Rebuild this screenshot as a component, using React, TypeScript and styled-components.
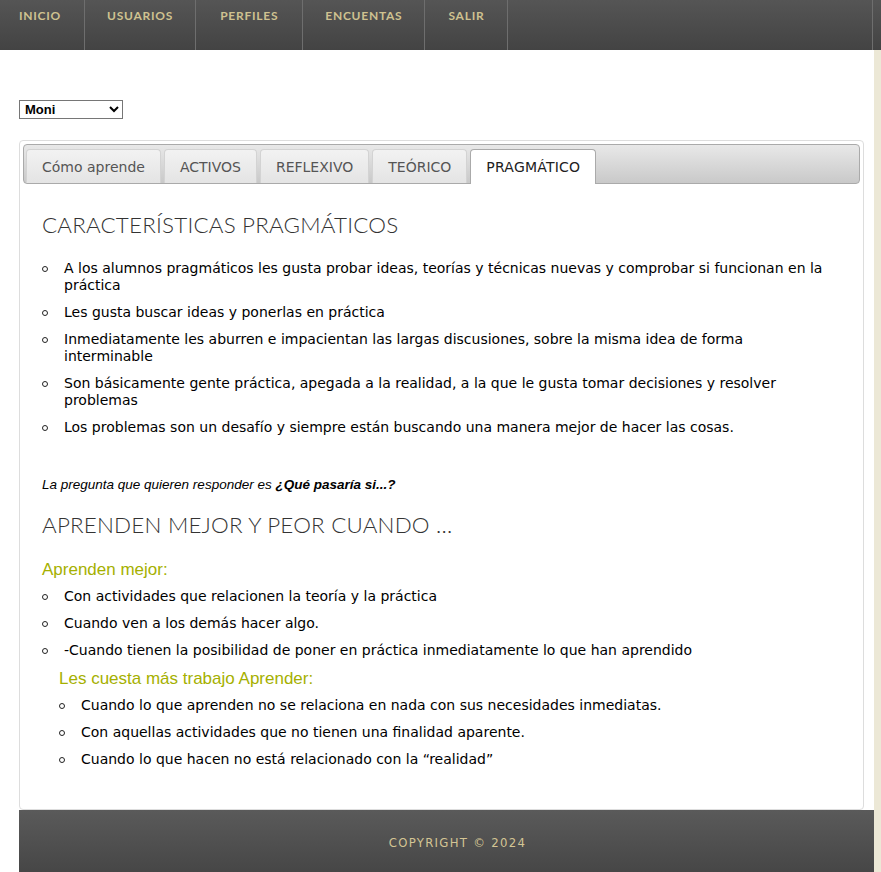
import React, { useState } from "react";
import styled, { createGlobalStyle } from "styled-components";

const Global = createGlobalStyle`
  html, body { margin: 0; padding: 0; }
  body { background: #ece8d6; font-family: "DejaVu Sans", Verdana, sans-serif; }
`;

const TopFix = styled.div`
  position: fixed;
  top: 0;
  left: 0;
  right: 0;
  z-index: 10;
`;

const Nav = styled.nav`
  display: flex;
  height: 50px;
  background: linear-gradient(#555555, #434343);
`;

const NavItem = styled.a<{ $pad?: number }>`
  display: flex;
  align-items: flex-start;
  padding: 8px ${(p) => 22 + (p.$pad || 0)}px 0 ${(p) => 22 + (p.$pad || 0)}px;
  border-right: 1px solid #6e6e6e;
  color: #cfc290;
  font-family: Lato, "Liberation Sans", sans-serif;
  font-weight: 700;
  font-size: 12px;
  letter-spacing: 0.75px;
  text-decoration: none;
  &:first-child { padding-left: 19px; padding-right: 23px; }
`;

const NavFill = styled.div`
  flex: 1;
  border-right: 1px solid #6e6e6e;
  max-width: 364px;
`;

const Page = styled.div`
  width: 874px;
  background: #ffffff;
`;

const Content = styled.div`
  padding: 100px 10px 0 19px;
`;

const Select = styled.select`
  width: 104px;
  height: 19px;
  font-family: Arial, "Liberation Sans", sans-serif;
  font-size: 13px;
  font-weight: 700;
  color: #000;
  padding: 0 0 0 1px;
  border: 1px solid #767676;
  border-radius: 0;
  background: #fff;
  margin: 0;
  display: block;
`;

const Card = styled.div`
  margin-top: 21px;
  width: 837px;
  border: 1px solid #dddddd;
  border-radius: 4px;
  padding: 3px;
  background: #fff;
`;

const TabBar = styled.div`
  display: flex;
  gap: 3px;
  height: 34px;
  padding: 4px 2px 0 2px;
  border: 1px solid #aaaaaa;
  border-radius: 4px;
  background: linear-gradient(#e8e8e8, #c9c9c9);
`;

const Tab = styled.button<{ $active?: boolean }>`
  height: ${(p) => (p.$active ? "35px" : "34px")};
  box-sizing: border-box;
  padding: 0 15px;
  border: 1px solid ${(p) => (p.$active ? "#aaaaaa" : "#d3d3d3")};
  border-bottom: 0;
  border-radius: 4px 4px 0 0;
  background: ${(p) => (p.$active ? "#ffffff" : "linear-gradient(#f2f2f2, #e4e4e4)")};
  color: ${(p) => (p.$active ? "#212121" : "#555555")};
  font-family: "DejaVu Sans", Verdana, sans-serif;
  font-size: 14px;
  letter-spacing: ${(p) => (p.$active ? "0.2px" : "0")};
  cursor: pointer;
  position: relative;
  z-index: 1;
`;

const Panel = styled.div`
  padding: 26px 28px 28px 19px;
`;

const Heading = styled.h2`
  margin: 0 0 20px 0;
  font-family: Lato, "Open Sans", sans-serif;
  font-weight: 300;
  font-size: 22.4px;
  letter-spacing: 0.2px;
  color: #333333;
  line-height: 30px;
`;

const List = styled.ul<{ $nested?: boolean }>`
  list-style: none;
  margin: 0;
  padding-left: ${(p) => (p.$nested ? "17px" : "22px")};
  font-size: 14px;
  line-height: 17px;
  color: #000;
`;

const Item = styled.li`
  position: relative;
  margin-bottom: 10px;
  &::before {
    content: "";
    position: absolute;
    left: -22px;
    top: 6px;
    width: 4px;
    height: 4px;
    border: 1px solid #222;
    border-radius: 50%;
  }
`;

const Question = styled.p`
  margin: 41px 0 18px 0;
  font-family: Arial, "Liberation Sans", sans-serif;
  font-size: 13.5px;
  font-style: italic;
  color: #000;
  b { font-weight: 700; }
`;

const SubHeading = styled.h3<{ $indent?: boolean }>`
  margin: 0 0 8px ${(p) => (p.$indent ? "-5px" : "0")};
  font-family: Arial, "Liberation Sans", sans-serif;
  font-weight: 400;
  font-size: 17px;
  line-height: 20px;
  color: #a5b000;
`;

const Footer = styled.footer`
  margin-left: 19px;
  width: 855px;
  height: 70px;
  box-sizing: border-box;
  padding: 25px 0 0 22px;
  display: flex;
  justify-content: center;
  background: linear-gradient(#5a5a5a, #444444);
  color: #d4c594;
  font-family: "DejaVu Sans Condensed", "Liberation Sans Narrow", sans-serif;
  font-size: 13px;
  letter-spacing: 1.3px;
`;

const navItems: { label: string; pad?: number }[] = [
  { label: "INICIO" },
  { label: "USUARIOS" },
  { label: "PERFILES", pad: 2 },
  { label: "ENCUENTAS" },
  { label: "SALIR", pad: 1 },
];

const tabs = ["Cómo aprende", "ACTIVOS", "REFLEXIVO", "TEÓRICO", "PRAGMÁTICO"];

export default function App() {
  const [active, setActive] = useState(4);
  return (
    <>
      <Global />
      <TopFix>
        <Nav>
          {navItems.map((n) => (
            <NavItem key={n.label} href="#" $pad={n.pad}>{n.label}</NavItem>
          ))}
          <NavFill />
        </Nav>
      </TopFix>
      <Page>
        <Content>
          <Select defaultValue="Moni">
            <option>Moni</option>
          </Select>
          <Card>
            <TabBar>
              {tabs.map((t, i) => (
                <Tab key={t} $active={i === active} onClick={() => setActive(i)}>
                  {t}
                </Tab>
              ))}
            </TabBar>
            <Panel>
              <Heading>CARACTERÍSTICAS PRAGMÁTICOS</Heading>
              <List>
                <Item>A los alumnos pragmáticos les gusta probar ideas, teorías y técnicas nuevas y comprobar si funcionan en la práctica</Item>
                <Item>Les gusta buscar ideas y ponerlas en práctica</Item>
                <Item>Inmediatamente les aburren e impacientan las largas discusiones, sobre la misma idea de forma interminable</Item>
                <Item>Son básicamente gente práctica, apegada a la realidad, a la que le gusta tomar decisiones y resolver problemas</Item>
                <Item>Los problemas son un desafío y siempre están buscando una manera mejor de hacer las cosas.</Item>
              </List>
              <Question>
                La pregunta que quieren responder es <b>¿Qué pasaría si...?</b>
              </Question>
              <Heading>APRENDEN MEJOR Y PEOR CUANDO ...</Heading>
              <SubHeading>Aprenden mejor:</SubHeading>
              <List>
                <Item>Con actividades que relacionen la teoría y la práctica</Item>
                <Item>Cuando ven a los demás hacer algo.</Item>
                <Item>-Cuando tienen la posibilidad de poner en práctica inmediatamente lo que han aprendido</Item>
                <SubHeading $indent>Les cuesta más trabajo Aprender:</SubHeading>
                <List $nested>
                  <Item>Cuando lo que aprenden no se relaciona en nada con sus necesidades inmediatas.</Item>
                  <Item>Con aquellas actividades que no tienen una finalidad aparente.</Item>
                  <Item>Cuando lo que hacen no está relacionado con la “realidad”</Item>
                </List>
              </List>
            </Panel>
          </Card>
        </Content>
        <Footer>COPYRIGHT © 2024</Footer>
      </Page>
    </>
  );
}
